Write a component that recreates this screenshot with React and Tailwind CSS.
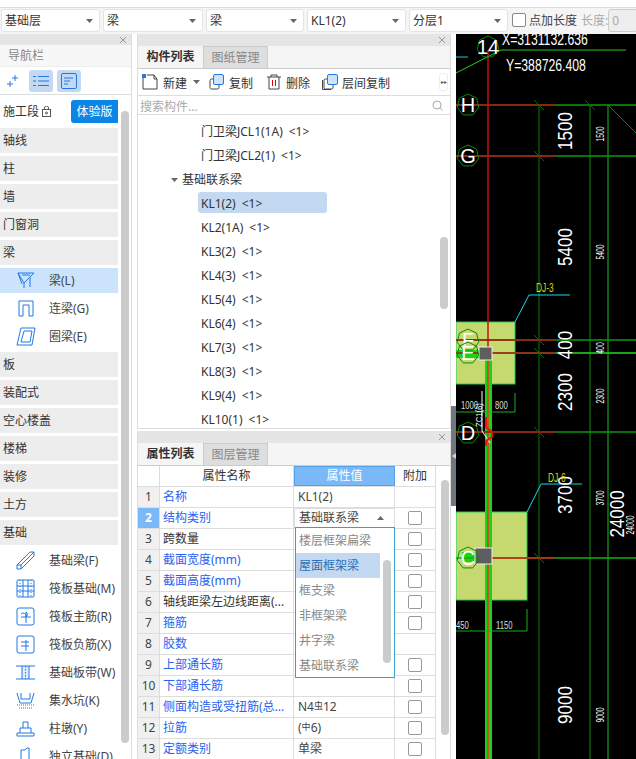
import React from 'react';

const FONT = '"Noto Sans", "Noto Sans CJK SC", sans-serif';
const BLUE = '#1f78e6';

function Caret({ up }) {
  return (
    <svg width="7" height="4" viewBox="0 0 7 4" className="shrink-0">
      <path d={up ? 'M0 4L3.5 0L7 4Z' : 'M0 0H7L3.5 4Z'} fill="#666" />
    </svg>
  );
}

function Close() {
  return (
    <svg width="8" height="8" viewBox="0 0 8 8" className="mr-[4px]">
      <path d="M1 1L7 7M7 1L1 7" stroke="#999" strokeWidth="1" />
    </svg>
  );
}

function TopSelect({ label, w }) {
  return (
    <div className={`${w} h-[23px] shrink-0 flex items-center justify-between bg-white rounded-[3px] border border-[#e4e4e4] pl-[3px] pr-[6px] text-[12px] text-[#333]`}>
      <span>{label}</span>
      <Caret />
    </div>
  );
}

const icons = {
  beam: <><path d="M2 2H18L8 12Z M2 2L6 13 M14 6V16 M8 12V17" /><path d="M6 4H14" /></>,
  lian: <path d="M3 17V2H17V17H13V6H7V17Z" />,
  quan: <><path d="M5 1H19L16 18H1Z" /><path d="M8 4H16L14 15H5Z" /></>,
  jl: <><path d="M1 14L14 1H18V5L5 18H1Z" /><path d="M1 14H5V18 M5 14L18 1" /></>,
  grid: <><rect x="1" y="1" width="17" height="17" rx="1" /><path d="M1 7H18M1 12H18M7 1V18M12 1V18" /><path d="M4 1V18M15 1V18" strokeDasharray="1 2" /></>,
  zhu: <><rect x="1" y="1" width="17" height="17" rx="2" /><path d="M5 10H15M10 5V16M10 5A3 3 0 0 1 10 10A3 3 0 0 0 5 7" /></>,
  fu: <><rect x="1" y="1" width="17" height="17" rx="2" /><path d="M5 7H13M5 11H13M10 5V16" /></>,
  dai: <><path d="M0 3H19M0 16H19M6 3V16M13 3V16" /><path d="M9.5 3V16" strokeDasharray="1.5 1.5" /><rect x="6" y="3" width="7" height="13" fill="#1f78e622" stroke="none" /></>,
  keng: <><path d="M1 2L4 12H15L18 2" /><path d="M5 2V8H14V2" /><path d="M1 14H18M3 17H16" strokeDasharray="1 1" /></>,
  dun: <><path d="M1 17H18V14H1ZM4 14V9H15V14M7 9V3H12V9" /></>,
  duli: <><path d="M5 14V3H9L11 1H13V14M1 19V14H17V19Z" /></>,
};

function NavHeader({ label }) {
  return <div className="h-[25px] shrink-0 flex items-center bg-[#ededed] pl-[3px] text-[12px] text-[#333]">{label}</div>;
}

function NavItem({ icon, label, active }) {
  return (
    <div className={`h-[25px] shrink-0 flex items-center text-[12px] text-[#444] ${active ? 'bg-[#cbe4fb]' : 'bg-white'}`}>
      <svg width="20" height="20" viewBox="0 0 20 20" fill="none" stroke={BLUE} strokeWidth="1" className="ml-[16px] mr-[13px] shrink-0">
        {icons[icon]}
      </svg>
      <span className="whitespace-nowrap">{label}</span>
    </div>
  );
}

function Sidebar() {
  return (
    <aside className="w-[132px] shrink-0 bg-[#f7f7f7] border-r border-[#ddd] flex flex-col overflow-hidden">
      <div className="h-[11px] bg-[#e5e5e5] flex items-center justify-end shrink-0"><Close /></div>
      <div className="h-[22px] flex items-center pl-[8px] text-[12px] text-[#888] border-b border-[#eee] shrink-0">导航栏</div>
      <div className="h-[28px] flex items-center border-b border-[#ddd] shrink-0 bg-white">
        <svg width="12" height="12" viewBox="0 0 12 12" fill="none" stroke={BLUE} className="ml-[7px] mr-[10px]">
          <path d="M8 0V6M5 3H11M3 6V12M0 9H6" />
        </svg>
        <div className="w-[24px] h-[22px] rounded-[3px] bg-[#c2d9f1] flex items-center justify-center">
          <svg width="16" height="12" viewBox="0 0 16 12" fill="none" stroke={BLUE}>
            <path d="M5 1.5H16M5 6H16M5 10.5H16M0 1.5H3M0 6H3M0 10.5H3" />
          </svg>
        </div>
        <div className="w-[24px] h-[22px] rounded-[3px] bg-[#c2d9f1] flex items-center justify-center ml-[4px]">
          <svg width="16" height="16" viewBox="0 0 16 16" fill="none" stroke={BLUE}>
            <rect x="0.5" y="0.5" width="15" height="15" rx="1.5" />
            <path d="M3 5H12M3 8H9M3 11H7" />
          </svg>
        </div>
      </div>
      <div className="flex flex-1 min-h-0 bg-white">
        <div className="w-[118px] shrink-0 flex flex-col gap-[3px] pt-[5px]">
          <div className="h-[23px] shrink-0 flex items-center justify-between text-[12px] text-[#333] pl-[3px] mb-[2px]">
            <span className="flex items-center gap-[3px]">
              施工段
              <svg width="9" height="11" viewBox="0 0 9 11" fill="none" stroke="#555"><rect x="0.5" y="3.5" width="8" height="7" /><path d="M2.5 3.5V2A2 2 0 0 1 6.5 2V3.5" /><circle cx="4.5" cy="7" r="1" /></svg>
            </span>
            <span className="w-[47px] h-full bg-[#0b86e5] text-white rounded-l-[3px] flex items-center justify-center">体验版</span>
          </div>
          <NavHeader label="轴线" />
          <NavHeader label="柱" />
          <NavHeader label="墙" />
          <NavHeader label="门窗洞" />
          <NavHeader label="梁" />
          <NavItem icon="beam" label="梁(L)" active />
          <NavItem icon="lian" label="连梁(G)" />
          <NavItem icon="quan" label="圈梁(E)" />
          <NavHeader label="板" />
          <NavHeader label="装配式" />
          <NavHeader label="空心楼盖" />
          <NavHeader label="楼梯" />
          <NavHeader label="装修" />
          <NavHeader label="土方" />
          <NavHeader label="基础" />
          <NavItem icon="jl" label="基础梁(F)" />
          <NavItem icon="grid" label="筏板基础(M)" />
          <NavItem icon="zhu" label="筏板主筋(R)" />
          <NavItem icon="fu" label="筏板负筋(X)" />
          <NavItem icon="dai" label="基础板带(W)" />
          <NavItem icon="keng" label="集水坑(K)" />
          <NavItem icon="dun" label="柱墩(Y)" />
          <NavItem icon="duli" label="独立基础(D)" />
        </div>
        <div className="w-[8px] h-[632px] ml-[3px] mt-[16px] rounded-full bg-[#cbcbcb] shrink-0" />
      </div>
    </aside>
  );
}

function Tabs({ first, second, h }) {
  return (
    <div className={`${h} flex border-b border-[#ccc] bg-[#f5f5f5] shrink-0 text-[12px]`}>
      <div className="w-[65px] flex items-center justify-center font-bold text-[#333]">{first}</div>
      <div className="w-[65px] flex items-center justify-center bg-[#dedede] text-[#888] border-x border-t border-[#ccc]">{second}</div>
    </div>
  );
}

function ToolIcon({ kind }) {
  if (kind === 'new') {
    return (
      <svg width="16" height="16" viewBox="0 0 16 16" fill="none" stroke="#444">
        <path d="M1 4V15H15V5L12 1H5" />
        <path d="M12 1V5H15" />
        <rect x="0" y="0" width="4" height="4" fill={BLUE} stroke="none" />
      </svg>
    );
  }
  if (kind === 'del') {
    return (
      <svg width="14" height="16" viewBox="0 0 14 16" fill="none" stroke="#444">
        <path d="M0 3H14M4 3V1H10V3M2 3V15H12V3" />
        <path d="M5.5 6V12M8.5 6V12" stroke="#e00" />
      </svg>
    );
  }
  return (
    <svg width="16" height="16" viewBox="0 0 16 16" fill="none">
      {kind === 'floor' && <path d="M0.5 6V15.5H9" stroke="#444" />}
      <rect x="2" y="5" width="9" height="10" rx="1.5" stroke="#444" />
      <rect x="5.5" y="0.5" width="10" height="10" rx="1.5" fill="#cfe3f8" stroke={BLUE} />
    </svg>
  );
}

const treeItems = [
  { label: '门卫梁JCL1(1A)', sub: '<1>' },
  { label: '门卫梁JCL2(1)', sub: '<1>' },
  { label: '基础联系梁', group: true },
  { label: 'KL1(2)', sub: '<1>', selected: true },
  { label: 'KL2(1A)', sub: '<1>' },
  { label: 'KL3(2)', sub: '<1>' },
  { label: 'KL4(3)', sub: '<1>' },
  { label: 'KL5(4)', sub: '<1>' },
  { label: 'KL6(4)', sub: '<1>' },
  { label: 'KL7(3)', sub: '<1>' },
  { label: 'KL8(3)', sub: '<1>' },
  { label: 'KL9(4)', sub: '<1>' },
  { label: 'KL10(1)', sub: '<1>' },
];

function ComponentPanel() {
  return (
    <section className="h-[395px] shrink-0 flex flex-col border-x border-b border-[#ddd] bg-white overflow-hidden">
      <div className="h-[12px] bg-[#e5e5e5] flex items-center justify-end shrink-0"><Close /></div>
      <Tabs first="构件列表" second="图纸管理" h="h-[23px]" />
      <div className="h-[27px] flex items-center pl-[4px] border-b border-[#ddd] shrink-0 text-[12px] text-[#333]">
        <ToolIcon kind="new" />
        <span className="ml-[5px] pt-[3px]">新建</span>
        <span className="ml-[6px] mr-[8px]"><Caret /></span>
        <ToolIcon kind="copy" />
        <span className="ml-[5px] mr-[14px] pt-[3px]">复制</span>
        <ToolIcon kind="del" />
        <span className="ml-[5px] mr-[12px] pt-[3px]">删除</span>
        <ToolIcon kind="floor" />
        <span className="ml-[4px] pt-[3px]">层间复制</span>
        <span className="ml-auto mr-[2px] w-[9px] h-[18px] border border-[#eee] rounded-[3px] flex items-center justify-center text-[6px] text-[#555]">▸▸</span>
      </div>
      <div className="h-[19px] flex items-center justify-between px-[2px] border-b border-[#ddd] shrink-0 text-[12px] text-[#aaa]">
        <span className="pt-[3px]">搜索构件...</span>
        <svg width="11" height="11" viewBox="0 0 11 11" fill="none" stroke="#aaa" className="mr-[5px]"><circle cx="5" cy="5" r="4" /><path d="M8 8L10.5 10.5" /></svg>
      </div>
      <div className="flex-1 flex min-h-0">
        <div className="flex-1 pt-[5px] overflow-hidden">
          {treeItems.map((item) => (
            <div key={item.label} className={`h-6 flex items-center text-[12px] text-[#333] ${item.group ? 'pl-[33px]' : 'pl-[63px]'}`}>
              {item.group && <span className="mr-[4px]"><Caret /></span>}
              <span className={item.selected ? 'w-[129px] h-[21px] -ml-[3px] -mt-[4px] pl-[3px] pt-[4px] rounded-[3px] bg-[#c2d9f1] flex items-center whitespace-nowrap' : 'whitespace-nowrap'}>
                {item.label}
                {item.sub && <span className="ml-[6px]">{item.sub}</span>}
              </span>
            </div>
          ))}
        </div>
        <div className="w-[8px] h-[72px] mt-[122px] mr-[2px] rounded-full bg-[#cbcbcb] shrink-0" />
      </div>
    </section>
  );
}

const rows = [
  { n: 1, name: '名称', blue: true, value: 'KL1(2)' },
  { n: 2, name: '结构类别', blue: true, active: true, check: true },
  { n: 3, name: '跨数量', check: true },
  { n: 4, name: '截面宽度(mm)', blue: true, check: true },
  { n: 5, name: '截面高度(mm)', blue: true, check: true },
  { n: 6, name: '轴线距梁左边线距离(...', check: true },
  { n: 7, name: '箍筋', blue: true, check: true },
  { n: 8, name: '胶数', blue: true },
  { n: 9, name: '上部通长筋', blue: true, check: true },
  { n: 10, name: '下部通长筋', blue: true, check: true },
  { n: 11, name: '侧面构造或受扭筋(总...', blue: true, check: true, rebar: 'N4' },
  { n: 12, name: '拉筋', blue: true, check: true, tie: true },
  { n: 13, name: '定额类别', blue: true, value: '单梁', check: true },
];

function Row({ row }) {
  return (
    <div className="h-[21px] flex border-b border-[#ddd] text-[12px]">
      <div className={`w-[22px] shrink-0 flex items-center justify-center border-r border-[#ddd] ${row.active ? 'bg-[#7ab8f8] text-white font-bold' : 'bg-[#f0f0f0] text-[#444]'}`}>{row.n}</div>
      <div className={`w-[134px] shrink-0 flex items-center pl-[3px] border-r border-[#ddd] whitespace-nowrap overflow-hidden ${row.blue ? 'text-[#2a62f0]' : 'text-[#333]'}`}>{row.name}</div>
      <div className={`w-[101px] shrink-0 flex items-center pl-[4px] border-r border-[#ddd] text-[#444] ${row.active ? 'border border-[#55a0e8] justify-between pr-[10px]' : ''}`}>
        {row.active && <><span>基础联系梁</span><Caret up /></>}
        {row.value}
        {row.rebar && <>{row.rebar}<span className="text-[9px] -mt-[3px]">虫</span>12</>}
        {row.tie && <>(<span className="text-[9px] -mt-[3px]">中</span>6)</>}
      </div>
      <div className="w-[41px] shrink-0 flex items-center justify-center border-r border-[#ddd]">
        {row.check && <span className="w-[14px] h-[14px] rounded-[2px] border border-[#999] bg-white" />}
      </div>
    </div>
  );
}

const options = ['楼层框架扁梁', '屋面框架梁', '框支梁', '非框架梁', '井字梁', '基础联系梁'];

function PropertyPanel() {
  return (
    <section className="relative flex-1 min-h-0 mt-[2px] flex flex-col border-x border-[#ddd] bg-white overflow-hidden">
      <div className="h-[12px] bg-[#e5e5e5] flex items-center justify-end shrink-0"><Close /></div>
      <Tabs first="属性列表" second="图层管理" h="h-[23px]" />
      <div className="flex flex-1 min-h-0">
        <div className="w-[298px] shrink-0">
          <div className="h-[21px] flex border-b border-[#ddd] text-[12px]">
            <div className="w-[22px] shrink-0 border-r border-[#ddd]" />
            <div className="w-[134px] shrink-0 flex items-center justify-center border-r border-[#ddd] text-[#333]">属性名称</div>
            <div className="w-[101px] shrink-0 flex items-center justify-center bg-[#7ab8f8] border border-[#55a0e8] text-white">属性值</div>
            <div className="w-[41px] shrink-0 flex items-center justify-center border-r border-[#ddd] text-[#333]">附加</div>
          </div>
          {rows.map((row) => <Row key={row.n} row={row} />)}
        </div>
        <div className="w-[8px] h-[255px] mt-[14px] ml-[5px] rounded-full bg-[#cbcbcb] shrink-0" />
      </div>
      <div className="absolute left-[157px] top-[96px] w-[100px] h-[151px] bg-white border border-[#3a9fc9] flex text-[12px] text-[#888]">
        <div className="w-[84px]">
          {options.map((opt, i) => (
            <div key={opt} className={`h-[25px] flex items-center pl-[3px] whitespace-nowrap ${i === 1 ? 'bg-[#c2d9f1] text-[#2f6fb5]' : ''}`}>{opt}</div>
          ))}
        </div>
        <div className="w-[8px] h-[103px] mt-[32px] ml-[3px] rounded-full bg-[#cbcbcb]" />
      </div>
    </section>
  );
}

function Divider() {
  return (
    <div className="w-[5px] shrink-0 bg-white flex flex-col">
      <div className="h-[372px]" />
      <div className="h-[100px] bg-[#6f7780] flex items-center justify-center">
        <svg width="4" height="6" viewBox="0 0 4 6"><path d="M4 0V6L0 3Z" fill="#cfd3d8" /></svg>
      </div>
    </div>
  );
}

function Axis({ x, y, label, size = 20 }) {
  const r = 11;
  const pts = Array.from({ length: 7 }, (_, i) => {
    const a = (Math.PI * 2 * i) / 7 - Math.PI / 2;
    return `${x + r * Math.cos(a)},${y + r * Math.sin(a)}`;
  }).join(' ');
  return (
    <g>
      <polygon points={pts} fill="none" stroke="#0a8a0a" />
      <text x={x} y={y + size * 0.36} textAnchor="middle" fontSize={size} fill="#fff" fontFamily="Liberation Sans, sans-serif">{label}</text>
    </g>
  );
}

function Dim({ x, y, label, size = 20, squeeze = 0.85 }) {
  return (
    <text transform={`translate(${x} ${y}) rotate(-90) scale(${squeeze} 1)`} textAnchor="middle" fontSize={size} fill="#fff" fontFamily="Liberation Sans, sans-serif">{label}</text>
  );
}

function Tick({ x, y }) {
  return <path d={`M${x - 5} ${y - 5}L${x + 5} ${y + 5}`} stroke="#0a6a0a" />;
}

function Grid({ y, bright }) {
  return (
    <g>
      <path d={`M456 ${y}H636`} stroke={bright ? '#22dd22' : '#0c9a0c'} strokeWidth="1.5" />
      <path d={`M456 ${y}H556`} stroke="#b01010" strokeWidth="1.5" />
    </g>
  );
}

function Cad() {
  return (
    <div className="flex-1 min-w-0 bg-black overflow-hidden">
      <svg width="180" height="725" viewBox="456 34 180 725" className="block">
        <rect x="456" y="322" width="59" height="62" fill="#c6d96f" stroke="#1fd05a" />
        <rect x="456" y="512" width="71" height="88" fill="#c6d96f" stroke="#1fd05a" />
        <path d="M539 105V759" stroke="#087a08" />
        <path d="M590 105V759" stroke="#0a8f0a" />
        <path d="M608 105V759" stroke="#16c016" />
        <path d="M608 105L636 133" stroke="#0a8a0a" />
        <rect x="485" y="360" width="7" height="399" fill="#16d416" />
        <rect x="456" y="350" width="34" height="8" fill="#16d416" />
        <rect x="462" y="552" width="16" height="10" fill="#16d416" />
        <path d="M488 50V360" stroke="#c81010" strokeWidth="1.5" />
        <path d="M488 360V759" stroke="#f03020" strokeWidth="1.5" />
        <Grid y={105} />
        <Grid y={156} />
        <Grid y={340} />
        <Grid y={353} bright />
        <Grid y={432} />
        <path d="M456 558H636" stroke="#12b012" strokeWidth="1.5" />
        <path d="M488 558H556" stroke="#d02010" strokeWidth="1.5" />
        {[105, 156, 340, 353, 432, 558].map((y) => <Tick key={y} x={539} y={y} />)}
        <Tick x={590} y={105} />
        <path d="M456 73L501 50H626" fill="none" stroke="#22cc22" />
        <path d="M456 57H468" stroke="#18c8c8" />
        <path d="M515 322L529 295H570M527 512L541 484H582" fill="none" stroke="#18d8e8" />
        <path d="M456 412H515V393" fill="none" stroke="#16b016" />
        <path d="M456 631H527V609" fill="none" stroke="#16b016" />
        <path d="M482 391V431L490 443" fill="none" stroke="#fff" />
        <path d="M486 417V427L492 432V437L486 441V446" fill="none" stroke="#f01010" strokeWidth="2" />
        <rect x="479" y="347" width="13" height="13" fill="#5e5e5e" stroke="#eee" />
        <rect x="475" y="548" width="17" height="16" fill="#5e5e5e" stroke="#eee" />
        <Axis x={488} y={47} label="14" />
        <Axis x={468} y={105} label="H" />
        <Axis x={468} y={156} label="G" />
        <Axis x={468} y={340} label="F" />
        <Axis x={468} y={353} label="E" />
        <Axis x={468} y={433} label="D" />
        <Axis x={468} y={558} label="C" />
        <text transform="translate(502 45) scale(0.72 1)" fontSize="17" fill="#fff" fontFamily="Liberation Sans, sans-serif">X=3131132.636</text>
        <text transform="translate(506 71) scale(0.72 1)" fontSize="17" fill="#fff" fontFamily="Liberation Sans, sans-serif">Y=388726.408</text>
        <Dim x={572} y={131} label="1500" />
        <Dim x={572} y={247} label="5400" />
        <Dim x={572} y={345} label="400" />
        <Dim x={572} y={392} label="2300" />
        <Dim x={572} y={495} label="3700" />
        <Dim x={572} y={705} label="9000" />
        <Dim x={604} y={134} label="1500" size={11} squeeze={0.62} />
        <Dim x={604} y={252} label="5400" size={11} squeeze={0.62} />
        <Dim x={604} y={348} label="400" size={11} squeeze={0.62} />
        <Dim x={604} y={396} label="2300" size={11} squeeze={0.62} />
        <Dim x={604} y={498} label="3700" size={11} squeeze={0.62} />
        <Dim x={604} y={715} label="9000" size={11} squeeze={0.62} />
        <Dim x={624} y={514} label="24000" />
        <Dim x={634} y={525} label="24000" size={11} squeeze={0.62} />
        <Dim x={482} y={415} label="ZC1(6)" size={9} />
        <text transform="translate(461 409) scale(0.7 1)" fontSize="11" fill="#ddd" fontFamily="Liberation Sans, sans-serif">1000</text>
        <text transform="translate(495 409) scale(0.7 1)" fontSize="11" fill="#ddd" fontFamily="Liberation Sans, sans-serif">800</text>
        <text transform="translate(456 629) scale(0.7 1)" fontSize="11" fill="#ddd" fontFamily="Liberation Sans, sans-serif">450</text>
        <text transform="translate(496 629) scale(0.7 1)" fontSize="11" fill="#ddd" fontFamily="Liberation Sans, sans-serif">1150</text>
        <text transform="translate(536 292) scale(0.7 1)" fontSize="12" fill="#d8d810" fontFamily="Liberation Sans, sans-serif">DJ-3</text>
        <text transform="translate(548 482) scale(0.7 1)" fontSize="12" fill="#d8d810" fontFamily="Liberation Sans, sans-serif">DJ-6</text>
      </svg>
    </div>
  );
}

export default function App() {
  return (
    <div className="w-[636px] h-[759px] flex flex-col overflow-hidden bg-white" style={{ fontFamily: FONT }}>
      <div className="h-[7px] shrink-0" />
      <div className="h-[27px] shrink-0 border-t border-[#ddd] bg-[#f5f5f5] flex items-start gap-[3px] pl-[1px] pt-[1px]">
        <TopSelect label="基础层" w="w-[99px]" />
        <TopSelect label="梁" w="w-[100px]" />
        <TopSelect label="梁" w="w-[98px]" />
        <TopSelect label="KL1(2)" w="w-[99px]" />
        <TopSelect label="分层1" w="w-[99px]" />
        <span className="w-[14px] h-[14px] mt-[4px] rounded-[2px] border border-[#888] bg-white ml-[1px] shrink-0" />
        <span className="leading-[23px] text-[12px] text-[#444] whitespace-nowrap">点加长度</span>
        <span className="leading-[23px] text-[12px] text-[#aaa] whitespace-nowrap ml-[1px]">长度:</span>
        <span className="w-[30px] h-[23px] shrink-0 -ml-[3px] bg-[#eee] border border-[#ccc] rounded-[3px] text-[12px] text-[#aaa] pl-[3px] flex items-center">0</span>
      </div>
      <div className="flex flex-1 min-h-0">
        <Sidebar />
        <div className="w-[5px] shrink-0 bg-white" />
        <div className="w-[314px] shrink-0 flex flex-col">
          <ComponentPanel />
          <PropertyPanel />
        </div>
        <Divider />
        <Cad />
      </div>
    </div>
  );
}
